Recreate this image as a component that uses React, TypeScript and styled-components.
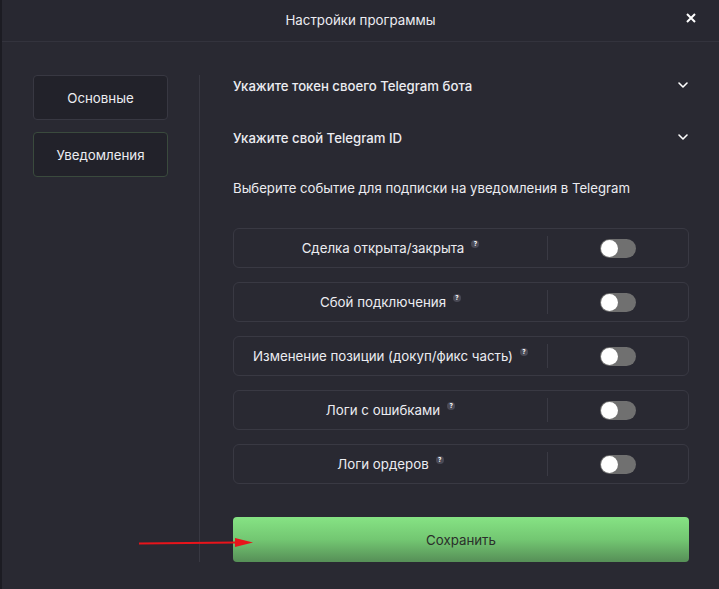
import React, { useState } from "react";
import styled, { createGlobalStyle } from "styled-components";

const GlobalStyle = createGlobalStyle`
  html, body {
    margin: 0;
    padding: 0;
    background: #1c1c23;
  }
  body {
    font-family: Inter, "Noto Sans", sans-serif;
    color: #ececf1;
  }
`;

const Modal = styled.div`
  position: relative;
  width: 717px;
  height: 589px;
  margin-left: 2px;
  background: #292932;
  display: flex;
  flex-direction: column;
`;

const Header = styled.header`
  height: 40px;
  padding-bottom: 1px;
  border-bottom: 1px solid #33333d;
  background: #282831;
  display: flex;
  align-items: center;
  justify-content: center;
  position: relative;
  font-size: 13.3px;
`;

const CloseButton = styled.button`
  position: absolute;
  right: 21px;
  top: 11px;
  background: none;
  border: 0;
  padding: 0;
  color: #fff;
  width: 14px;
  height: 14px;
  cursor: pointer;
`;

const Body = styled.div`
  display: flex;
  padding: 33px 30px 0 31px;
  flex: 1;
`;

const Sidebar = styled.nav`
  width: 167px;
  display: flex;
  flex-direction: column;
  gap: 12px;
  border-right: 1px solid #383842;
  height: 487px;
  box-sizing: border-box;
`;

const TabButton = styled.button<{ $active?: boolean }>`
  width: 135px;
  height: 45px;
  box-sizing: border-box;
  background: #22222a;
  border: 1px solid ${(p) => (p.$active ? "#3a4a3d" : "#383842")};
  border-radius: 4px;
  color: #ececf1;
  font-family: inherit;
  font-size: 13.3px;
  cursor: pointer;
`;

const Content = styled.section`
  flex: 1;
  padding-left: 33px;
  padding-top: 1px;
  display: flex;
  flex-direction: column;
`;

const AccordionRow = styled.div`
  height: 52px;
  display: flex;
  align-items: flex-start;
  justify-content: space-between;
  padding-top: 2px;
  box-sizing: border-box;
  font-size: 13.2px;
  font-weight: 500;
  svg {
    margin-top: 1px;
  }
`;

const Description = styled.p`
  margin: 0 0 32px;
  font-size: 13.2px;
  line-height: 16px;
`;

const Cards = styled.div`
  display: flex;
  flex-direction: column;
  gap: 14px;
`;

const Card = styled.div`
  height: 40px;
  box-sizing: border-box;
  border: 1px solid #393943;
  border-radius: 6px;
  display: flex;
  align-items: center;
`;

const CardLabel = styled.div`
  flex: 0 0 313px;
  display: flex;
  justify-content: center;
  align-items: center;
  font-size: 13.3px;
  border-right: 1px solid #3a3a44;
  height: 24px;
`;

const Hint = styled.span`
  display: inline-flex;
  align-items: center;
  justify-content: center;
  width: 8px;
  height: 8px;
  border-radius: 50%;
  background: #4a4a56;
  color: #fff;
  font-size: 6px;
  font-weight: 700;
  margin-left: 7px;
  margin-top: -9px;
`;

const SwitchCell = styled.div`
  flex: 1;
  display: flex;
  justify-content: center;
`;

const Switch = styled.button<{ $on: boolean }>`
  width: 36px;
  height: 19px;
  border-radius: 10px;
  border: 0;
  padding: 0;
  background: ${(p) => (p.$on ? "#6fcf6f" : "#707070")};
  position: relative;
  cursor: pointer;
  &::after {
    content: "";
    position: absolute;
    top: 1px;
    left: ${(p) => (p.$on ? "18px" : "1px")};
    width: 17px;
    height: 17px;
    border-radius: 50%;
    background: #fff;
  }
`;

const SaveButton = styled.button`
  margin-top: 33px;
  height: 45px;
  border: 0;
  border-radius: 4px;
  background: linear-gradient(180deg, #86e384 0%, #73c772 50%, #568f57 100%);
  color: #2b2f2b;
  font-family: inherit;
  font-size: 13.3px;
  cursor: pointer;
`;

const Arrow = styled.svg`
  position: absolute;
  left: 135px;
  top: 536px;
`;

const Chevron = () => (
  <svg width="12" height="12" viewBox="0 0 12 12" fill="none">
    <path d="M2 4l4 4 4-4" stroke="#fff" strokeWidth="1.6" strokeLinecap="round" strokeLinejoin="round" />
  </svg>
);

const events = [
  "Сделка открыта/закрыта",
  "Сбой подключения",
  "Изменение позиции (докуп/фикс часть)",
  "Логи с ошибками",
  "Логи ордеров",
];

export default function App() {
  const [on, setOn] = useState<boolean[]>(events.map(() => false));
  return (
    <>
      <GlobalStyle />
      <Modal>
        <Header>
          Настройки программы
          <CloseButton aria-label="Закрыть">
            <svg width="14" height="14" viewBox="0 0 14 14">
              <path d="M3 3l8 8M11 3l-8 8" stroke="#fff" strokeWidth="2" />
            </svg>
          </CloseButton>
        </Header>
        <Body>
          <Sidebar>
            <TabButton>Основные</TabButton>
            <TabButton $active>Уведомления</TabButton>
          </Sidebar>
          <Content>
            <AccordionRow>
              Укажите токен своего Telegram бота
              <Chevron />
            </AccordionRow>
            <AccordionRow>
              Укажите свой Telegram ID
              <Chevron />
            </AccordionRow>
            <Description>Выберите событие для подписки на уведомления в Telegram</Description>
            <Cards>
              {events.map((e, i) => (
                <Card key={e}>
                  <CardLabel>
                    {e}
                    <Hint>?</Hint>
                  </CardLabel>
                  <SwitchCell>
                    <Switch
                      $on={on[i]}
                      onClick={() => setOn(on.map((v, j) => (j === i ? !v : v)))}
                    />
                  </SwitchCell>
                </Card>
              ))}
            </Cards>
            <SaveButton>Сохранить</SaveButton>
          </Content>
        </Body>
        <Arrow width="120" height="14" viewBox="0 0 120 14">
          <path d="M2 7.5 L100 6.5" stroke="#e8141b" strokeWidth="2" />
          <path d="M98 2 L116 6.5 L98 11 Z" fill="#e8141b" />
        </Arrow>
      </Modal>
    </>
  );
}
